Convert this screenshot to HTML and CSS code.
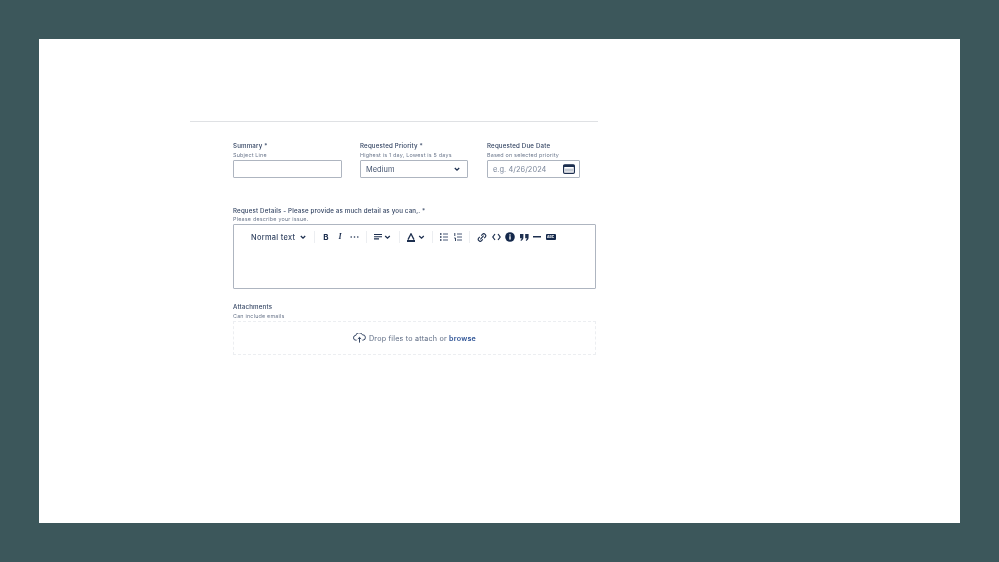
FILE: index.html
```html
<!DOCTYPE html>
<html lang="en">
<head>
    <meta charset="UTF-8">
    <meta name="viewport" content="width=device-width, initial-scale=1.0">
    <title>Request form</title>
    <link rel="stylesheet" href="styles.css">
</head>
<body>
    <div class="sheet">
        <div class="form">
            <div class="row">
                <div class="field summary">
                    <p class="label">Summary <span class="req">*</span></p>
                    <p class="hint">Subject Line</p>
                    <div class="input"></div>
                </div>
                <div class="field priority">
                    <p class="label">Requested Priority <span class="req">*</span></p>
                    <p class="hint">Highest is 1 day, Lowest is 5 days</p>
                    <div class="input select">
                        <span>Medium</span>
                        <svg class="chev" width="8" height="8" viewBox="0 0 8 8" fill="none" stroke="#1d2f4f" stroke-width="1.3"><polyline points="1.8 3 4 5.2 6.2 3"/></svg>
                    </div>
                </div>
                <div class="field due">
                    <p class="label">Requested Due Date</p>
                    <p class="hint">Based on selected priority</p>
                    <div class="input select date">
                        <span>e.g. 4/26/2024</span>
                        <svg width="12" height="10" viewBox="0 0 12 10"><rect x="0.6" y="0.8" width="10.8" height="8.6" rx="1.2" fill="none" stroke="#1d2f4f" stroke-width="1.2"/><rect x="0.6" y="0.8" width="10.8" height="2.2" fill="#1d2f4f"/><path d="M3 4.6v3M5 4.6v3M7 4.6v3M9 4.6v3" stroke="#7b889c" stroke-width="0.9"/></svg>
                    </div>
                </div>
            </div>

            <div class="block details">
                <p class="label">Request Details - Please provide as much detail as you can,. <span class="req">*</span></p>
                <p class="hint">Please describe your issue.</p>
                <div class="editor">
                    <div class="toolbar">
                        <div class="tool-group style">
                            <span class="style-name">Normal text</span>
                            <svg width="8" height="8" viewBox="0 0 8 8" fill="none" stroke="#1d2f4f" stroke-width="1.3"><polyline points="1.8 3 4 5.2 6.2 3"/></svg>
                        </div>
                        <div class="tool-group marks">
                            <span class="tool glyph bold">B</span>
                            <span class="tool glyph italic">I</span>
                            <span class="tool"><svg width="9" height="8" viewBox="0 0 9 8" fill="#1d2f4f"><circle cx="1.2" cy="4" r="0.8"/><circle cx="4.5" cy="4" r="0.8"/><circle cx="7.8" cy="4" r="0.8"/></svg></span>
                        </div>
                        <div class="tool-group align">
                            <svg width="17" height="8" viewBox="0 0 17 8" fill="none"><path d="M0 1.5h8M0 3.7h8M0 5.9h5" stroke="#1d2f4f" stroke-width="1.1"/><polyline points="11.2 3 13.5 5.2 15.8 3" stroke="#1d2f4f" stroke-width="1.3"/></svg>
                        </div>
                        <div class="tool-group color">
                            <svg width="18" height="9" viewBox="0 0 18 9" fill="none"><path d="M1 6.6 4 .8l3 5.8" stroke="#1d2f4f" stroke-width="1.3"/><rect x="0" y="7" width="8" height="2" fill="#1d2f4f"/><polyline points="12.2 3 14.5 5.2 16.8 3" stroke="#1d2f4f" stroke-width="1.3"/></svg>
                        </div>
                        <div class="tool-group lists">
                            <svg width="8" height="8" viewBox="0 0 8 8" fill="none"><path d="M3 1h5M3 4h5M3 7h5" stroke="#4a5a78" stroke-width="1"/><path d="M0 1h1.5M0 4h1.5M0 7h1.5" stroke="#1d2f4f" stroke-width="1.3"/></svg>
                            <svg width="8" height="8" viewBox="0 0 8 8" fill="none"><path d="M3 1h5M3 4h5M3 7h5" stroke="#4a5a78" stroke-width="1"/><path d="M0.8 0v3M0.2 5h1.3v3" stroke="#1d2f4f" stroke-width="0.9"/></svg>
                        </div>
                        <div class="tool-group inserts">
                            <svg width="10" height="9" viewBox="0 0 10 9" fill="none" stroke="#1d2f4f" stroke-width="1.1"><path d="M3.4 6.4 6.6 2.6"/><path d="M4.2 2.6 5.4 1.4a1.9 1.9 0 0 1 2.8 2.7L7.2 5.2"/><path d="M2.8 3.8 1.8 4.9a1.9 1.9 0 0 0 2.8 2.7L5.8 6.4"/></svg>
                            <svg width="9" height="8" viewBox="0 0 9 8" fill="none" stroke="#1d2f4f" stroke-width="1.2"><polyline points="3 1 0.8 4 3 7"/><polyline points="6 1 8.2 4 6 7"/></svg>
                            <svg width="10" height="10" viewBox="0 0 10 10"><circle cx="5" cy="5" r="4.8" fill="#14284b"/><rect x="4.3" y="4.2" width="1.4" height="3.4" fill="#fff"/><rect x="4.3" y="2.3" width="1.4" height="1.3" fill="#fff"/></svg>
                            <svg width="9" height="7" viewBox="0 0 9 7" fill="#1d2f4f"><path d="M0 0h3.4v3.2C3.4 5 2.6 6.2 1 7L.5 6c.8-.4 1.2-1 1.2-1.8H0zM5.2 0h3.4v3.2C8.6 5 7.8 6.2 6.2 7l-.5-1c.8-.4 1.2-1 1.2-1.8H5.2z"/></svg>
                            <svg width="8" height="2" viewBox="0 0 8 2"><rect width="8" height="1.5" fill="#1d2f4f"/></svg>
                            <span class="status">ABC</span>
                        </div>
                    </div>
                </div>
            </div>

            <div class="block attachments">
                <p class="label">Attachments</p>
                <p class="hint">Can include emails</p>
                <div class="dropzone">
                    <svg width="13" height="10" viewBox="0 0 13 10" fill="none" stroke="#344563" stroke-width="1"><path d="M3.6 7.2H3A2.4 2.4 0 0 1 2.8 2.4 3.4 3 0 0 1 9.4 1.8 2.7 2.7 0 0 1 10 7.2h-.6"/><path d="M6.5 9.6V4.4M4.8 6 6.5 4.4 8.2 6"/></svg>
                    <span>Drop files to attach or <span class="browse">browse</span></span>
                </div>
            </div>
        </div>
    </div>
</body>
</html>
```

FILE: styles.css
```css
html, body {
    margin: 0;
    height: 100%;
}

body {
    background: #3c575b;
    padding: 39px;
    box-sizing: border-box;
    font-family: Inter, "Open Sans", sans-serif;
    color: #1d2f4f;
}

p {
    margin: 0;
}

.sheet {
    background: white;
    height: 484px;
    width: 921px;
    padding: 82px 0 0 151px;
    box-sizing: border-box;
}

.form {
    width: 408px;
    border-top: 1px solid #dfe1e4;
    padding: 18px 0 0 43px;
    box-sizing: border-box;
    filter: blur(0.4px);
}

.row {
    display: flex;
}

.summary {
    width: 109px;
    margin-right: 18px;
}

.priority {
    width: 108px;
    margin-right: 19px;
}

.due {
    width: 93px;
}

.label {
    font-size: 6.2px;
    line-height: 9px;
    padding-top: 1px;
    font-weight: 500;
    letter-spacing: 0.16px;
    color: #344563;
    white-space: nowrap;
}

.req {
    color: #344563;
}

.hint {
    font-size: 5.4px;
    line-height: 10px;
    letter-spacing: 0.2px;
    color: #6b778c;
    white-space: nowrap;
}

.input {
    height: 18px;
    box-sizing: border-box;
    border: 1px solid #aeb5c0;
    border-radius: 1px;
    background: white;
}

.select {
    display: flex;
    align-items: center;
    justify-content: space-between;
    padding: 0 6px 0 5px;
    font-size: 7.4px;
    letter-spacing: 0.05px;
    color: #44546f;
}

.date {
    color: #7a869a;
    padding-right: 4px;
}

.block {
    width: 363px;
}

.details {
    margin-top: 27px;
}

.details .hint {
    line-height: 9px;
}

.editor {
    height: 65px;
    box-sizing: border-box;
    border: 1px solid #aeb5c0;
    border-radius: 1px;
}

.toolbar {
    display: flex;
    align-items: center;
    height: 12px;
    margin-top: 6px;
    padding-left: 17px;
}

.tool-group {
    display: flex;
    align-items: center;
    height: 12px;
    padding: 0 7px;
    border-right: 1px solid #eceef1;
}

.tool-group.style {
    padding: 0 7px 0 0;
    gap: 3px;
}

.tool-group.marks {
    padding: 0 5px 0 4px;
}

.tool-group.align {
    padding: 0 8px 0 7px;
}

.tool-group.lists {
    gap: 6px;
}

.tool-group.inserts {
    border-right: 0;
    gap: 4.5px;
}

.tool {
    width: 14px;
    display: flex;
    justify-content: center;
}

.style-name {
    width: 45px;
    font-size: 7.4px;
    font-weight: 500;
    letter-spacing: 0.3px;
    color: #344563;
    white-space: nowrap;
}

.glyph {
    font-size: 8px;
    line-height: 10px;
    color: #1d2f4f;
}

.bold {
    font-weight: 700;
}

.italic {
    font-family: "Liberation Serif", serif;
    font-style: italic;
    font-weight: 700;
}

.status {
    background: #14284b;
    color: white;
    font-size: 3.4px;
    font-weight: 700;
    line-height: 6px;
    padding: 0 1.5px;
    border-radius: 1px;
}

.attachments {
    margin-top: 12px;
}

.dropzone {
    height: 34px;
    box-sizing: border-box;
    border: 1px dashed #eceef1;
    display: flex;
    align-items: center;
    justify-content: center;
    gap: 3px;
    font-size: 7.2px;
    letter-spacing: 0.2px;
    color: #5e6c84;
}

.browse {
    color: #2f5496;
    font-weight: 600;
}
```
